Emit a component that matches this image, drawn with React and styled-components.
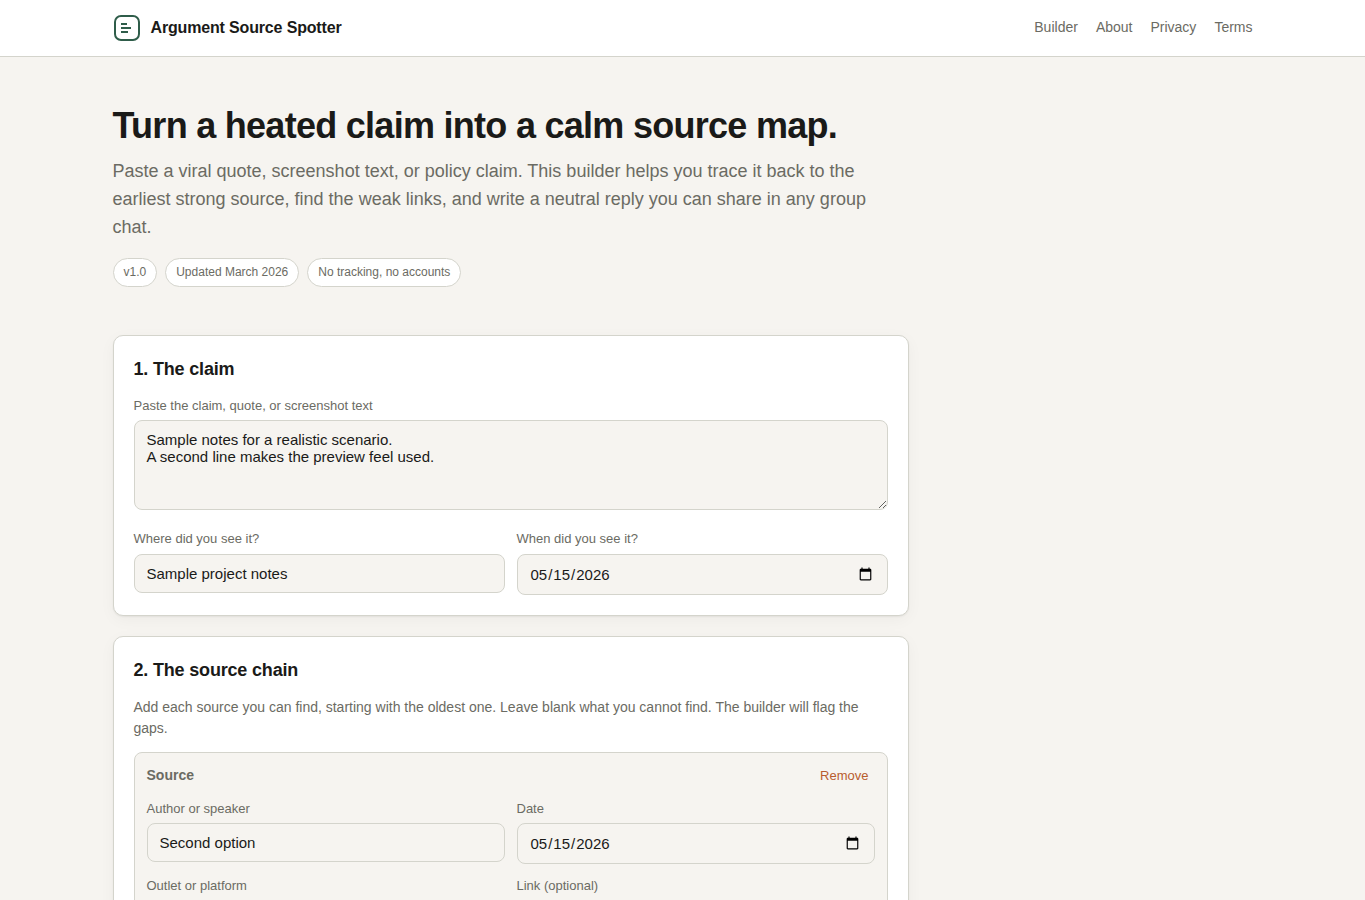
import { useState } from "react";
import styled, { createGlobalStyle } from "styled-components";

const GlobalStyle = createGlobalStyle`
  *, *::before, *::after {
    box-sizing: border-box;
  }
  body {
    margin: 0;
    background: #f6f4f0;
    color: #1a1a18;
    font-family: "Liberation Sans", Arial, sans-serif;
    font-size: 16px;
    line-height: 1.55;
  }
  h1, h2, p {
    margin: 0;
  }
`;

const Header = styled.header`
  background: #fff;
  border-bottom: 1px solid #d4d4cc;
`;

const Wrap = styled.div`
  max-width: 1180px;
  margin: 0 auto;
  padding: 0 20px;
`;

const HeaderRow = styled(Wrap)`
  display: flex;
  align-items: center;
  justify-content: space-between;
  height: 56px;
`;

const Brand = styled.a`
  display: flex;
  align-items: center;
  gap: 10px;
  color: #1a1a18;
  font-weight: 700;
  letter-spacing: -0.01em;
  text-decoration: none;
`;

const Nav = styled.nav`
  display: flex;
  gap: 18px;
  padding-bottom: 2px;
`;

const NavLink = styled.a`
  color: #6b6b63;
  font-size: 14px;
  line-height: 21px;
  text-decoration: none;
`;

const Hero = styled.section`
  max-width: 760px;
  padding: 48px 0;
`;

const Title = styled.h1`
  margin-bottom: 12px;
  font-size: 36px;
  line-height: 1.15;
  letter-spacing: -0.02em;
  white-space: nowrap;
`;

const Lede = styled.p`
  color: #6b6b63;
  font-size: 18px;
`;

const Pills = styled.div`
  display: flex;
  gap: 8px;
  margin-top: 16px;
`;

const Pill = styled.span`
  padding: 4px 10px;
  background: #fff;
  border: 1px solid #d4d4cc;
  border-radius: 999px;
  color: #6b6b63;
  font-size: 12px;
`;

const Layout = styled.main`
  display: grid;
  grid-template-columns: minmax(0, 1fr) 320px;
  gap: 24px;
`;

const Card = styled.section`
  margin-bottom: 20px;
  padding: 20px;
  background: #fff;
  border: 1px solid #d4d4cc;
  border-radius: 10px;
  box-shadow: 0 1px 2px rgba(0, 0, 0, 0.06), 0 4px 16px rgba(0, 0, 0, 0.04);
`;

const CardTitle = styled.h2`
  margin-bottom: 12px;
  font-size: 18px;
  letter-spacing: -0.01em;
`;

const Hint = styled.p`
  margin-bottom: 12px;
  color: #6b6b63;
  font-size: 14px;
`;

const FieldLabel = styled.label`
  display: block;
  color: #6b6b63;
  font-size: 13px;
`;

const Input = styled.input`
  display: block;
  width: 100%;
  margin-top: 4px;
  padding: 10px 12px;
  background: #f6f4f0;
  border: 1px solid #d4d4cc;
  border-radius: 8px;
  color: #1a1a18;
  font-family: inherit;
  font-size: 15px;
`;

const TextArea = styled(Input).attrs({ as: "textarea" })`
  min-height: 90px;
  margin-bottom: 19.8px;
  resize: vertical;
`;

const FieldGrid = styled.div`
  display: grid;
  grid-template-columns: 1fr 1fr;
  align-items: start;
  gap: 12px;
`;

const SourceBox = styled.div`
  padding: 12px;
  background: #f6f4f0;
  border: 1px solid #d4d4cc;
  border-radius: 8px;
`;

const SourceHead = styled.div`
  display: flex;
  align-items: center;
  justify-content: space-between;
  height: 21.7px;
  margin-bottom: 12px;
  color: #6b6b63;
  font-size: 14px;
  font-weight: 700;
`;

const RemoveButton = styled.button`
  padding: 4px 6px;
  background: none;
  border: 0;
  color: #b85c2e;
  font-family: inherit;
  font-size: 13px;
  cursor: pointer;
`;

function Logo() {
  return (
    <svg width="28" height="28" viewBox="0 0 28 28" fill="none" stroke="#2f5d4a" strokeWidth="2">
      <rect x="2" y="2" width="24" height="24" rx="6" />
      <path d="M8 10h6M8 14h10M8 18h7" />
    </svg>
  );
}

function Field({ label, type = "text", initial = "", control: Control = Input }) {
  const [value, setValue] = useState(initial);

  return (
    <FieldLabel>
      {label}
      <Control
        type={Control === Input ? type : undefined}
        value={value}
        onChange={(e) => setValue(e.target.value)}
      />
    </FieldLabel>
  );
}

export default function App() {
  return (
    <>
      <GlobalStyle />
      <Header>
        <HeaderRow>
          <Brand href="#">
            <Logo />
            Argument Source Spotter
          </Brand>
          <Nav>
            <NavLink href="#builder">Builder</NavLink>
            <NavLink href="#about">About</NavLink>
            <NavLink href="#privacy">Privacy</NavLink>
            <NavLink href="#terms">Terms</NavLink>
          </Nav>
        </HeaderRow>
      </Header>

      <Wrap>
        <Hero>
          <Title>Turn a heated claim into a calm source map.</Title>
          <Lede>
            Paste a viral quote, screenshot text, or policy claim. This builder helps you trace it
            back to the earliest strong source, find the weak links, and write a neutral reply you
            can share in any group chat.
          </Lede>
          <Pills>
            <Pill>v1.0</Pill>
            <Pill>Updated March 2026</Pill>
            <Pill>No tracking, no accounts</Pill>
          </Pills>
        </Hero>

        <Layout id="builder">
          <div>
            <Card>
              <CardTitle>1. The claim</CardTitle>
              <Field
                label="Paste the claim, quote, or screenshot text"
                control={TextArea}
                initial={"Sample notes for a realistic scenario.\nA second line makes the preview feel used."}
              />
              <FieldGrid>
                <Field label="Where did you see it?" initial="Sample project notes" />
                <Field label="When did you see it?" type="date" initial="2026-05-15" />
              </FieldGrid>
            </Card>

            <Card>
              <CardTitle>2. The source chain</CardTitle>
              <Hint>
                Add each source you can find, starting with the oldest one. Leave blank what you
                cannot find. The builder will flag the gaps.
              </Hint>
              <SourceBox>
                <SourceHead>
                  Source
                  <RemoveButton type="button">Remove</RemoveButton>
                </SourceHead>
                <FieldGrid>
                  <Field label="Author or speaker" initial="Second option" />
                  <Field label="Date" type="date" initial="2026-05-15" />
                  <Field label="Outlet or platform" />
                  <Field label="Link (optional)" />
                </FieldGrid>
              </SourceBox>
            </Card>
          </div>
        </Layout>
      </Wrap>
    </>
  );
}
